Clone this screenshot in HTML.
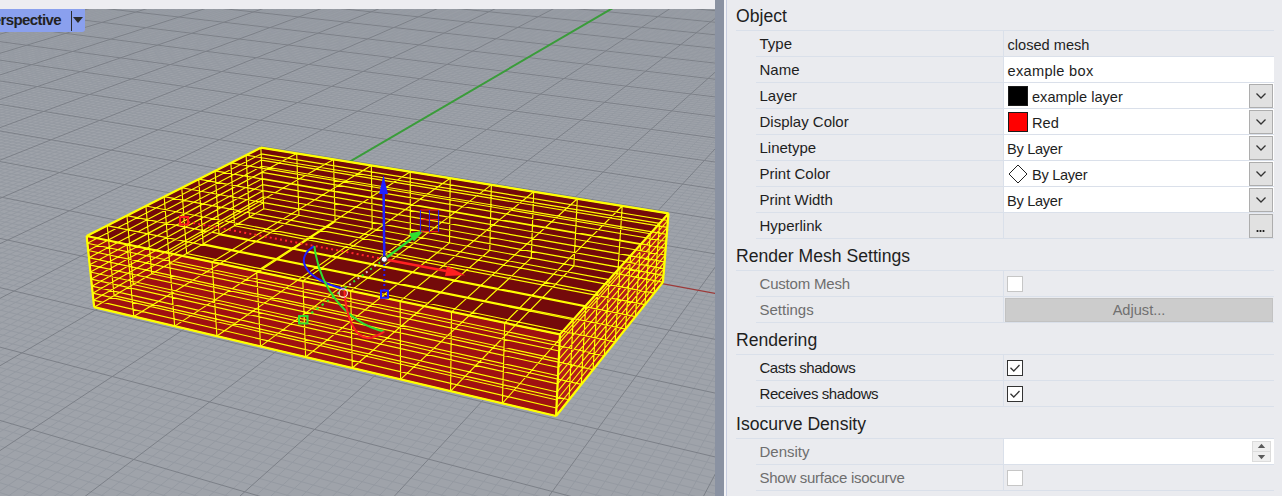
<!DOCTYPE html>
<html><head><meta charset="utf-8">
<style>
*{margin:0;padding:0;box-sizing:border-box}
html,body{width:1282px;height:496px;overflow:hidden;background:#eaebef;font-family:"Liberation Sans",sans-serif;color:#1e1e1e}
#topstrip{position:absolute;left:0;top:0;width:715px;height:9px;background:#ededf1}
#vsplit{position:absolute;left:715px;top:0;width:9px;height:496px;background:#8a92a2}
#vlight{position:absolute;left:724px;top:0;width:2px;height:496px;background:#f3f3f6}
#vline{position:absolute;left:726px;top:0;width:1px;height:496px;background:#c7cde0}
#panel{position:absolute;left:727px;top:0;width:555px;height:496px;background:#eaebef}
#tab{position:absolute;left:0;top:9px;width:85px;height:22.5px;background:#8aa0ee;border-bottom-right-radius:3px;overflow:hidden}
#tab .t{position:absolute;right:24px;top:1px;font-weight:bold;font-size:15px;letter-spacing:-0.6px;color:#222;white-space:nowrap;line-height:20px}
#tab .sep{position:absolute;left:71px;top:2px;width:1.2px;height:20px;background:#2a2a2a}
#tab .tri{position:absolute;left:72.8px;top:7.8px;width:0;height:0;border-left:5.2px solid transparent;border-right:5.2px solid transparent;border-top:6px solid #2a2a2a}
.hdr{position:absolute;left:736px;font-size:17.6px;color:#1e1e1e;white-space:nowrap;line-height:20px}
.hsep{position:absolute;left:736px;width:538px;height:1px;background:#dae0ea}
.rsep{position:absolute;left:756px;width:518px;height:1px;background:#dae0ea}
.cdiv{position:absolute;left:1003px;width:1px;background:#dae0ea}
.lbl{position:absolute;left:759.5px;font-size:15px;color:#1e1e1e;white-space:nowrap;line-height:18px}
.lbl.dis{color:#6e6e6e}
.val{position:absolute;font-size:14.6px;color:#1e1e1e;white-space:nowrap;line-height:18px;margin-top:1px}
.white{position:absolute;left:1004px;width:270px;background:#ffffff}
.dd{position:absolute;left:1249px;width:24px;height:24px;background:#e1e1e1;border:1px solid #adadad}
.dd svg{position:absolute;left:0;top:0}
.sw{position:absolute;left:1008px;width:20px;height:20px;border:1px solid #1a1a1a}
.cb{position:absolute;left:1007px;width:16px;height:16px;background:#fff}
.cb.off{border:1.5px solid #c6c6c6}
.cb.on{border:1.5px solid #333}
</style></head><body>
<div id="topstrip"></div>
<svg width="715" height="496" viewBox="0 0 715 496" style="position:absolute;left:0;top:0">
<defs><clipPath id="vp"><rect x="0" y="9" width="715" height="487"/></clipPath></defs>
<g clip-path="url(#vp)">
<rect x="0" y="9" width="715" height="487" fill="#9fa3aa"/>
<path d="M-1077.65 265.37L186.10 -52.21 M-1073.52 267.07L189.50 -51.91 M-1069.36 268.77L192.91 -51.61 M-1065.18 270.49L196.33 -51.30 M-1060.98 272.22L199.76 -51.00 M-1052.48 275.71L206.64 -50.38 M-1048.20 277.47L210.10 -50.08 M-1043.88 279.25L213.56 -49.77 M-1039.54 281.03L217.04 -49.46 M-1035.17 282.83L220.52 -49.15 M-1030.78 284.63L224.02 -48.84 M-1026.35 286.45L227.52 -48.53 M-1021.90 288.28L231.03 -48.21 M-1017.42 290.12L234.55 -47.90 M-1008.36 293.84L241.62 -47.27 M-1003.80 295.72L245.17 -46.95 M-999.20 297.61L248.72 -46.64 M-994.57 299.51L252.29 -46.32 M-989.91 301.43L255.87 -46.00 M-985.22 303.36L259.46 -45.68 M-980.49 305.30L263.05 -45.36 M-975.74 307.25L266.66 -45.04 M-970.96 309.22L270.28 -44.72 M-961.29 313.19L277.54 -44.07 M-956.41 315.19L281.18 -43.75 M-951.49 317.21L284.84 -43.42 M-946.55 319.25L288.50 -43.10 M-941.57 321.29L292.18 -42.77 M-936.55 323.36L295.86 -42.44 M-931.50 325.43L299.56 -42.11 M-926.42 327.52L303.27 -41.78 M-921.30 329.62L306.98 -41.45 M-910.95 333.87L314.44 -40.79 M-905.73 336.02L318.19 -40.45 M-900.46 338.19L321.95 -40.12 M-895.16 340.36L325.71 -39.78 M-889.83 342.56L329.49 -39.45 M-884.45 344.77L333.28 -39.11 M-879.04 346.99L337.08 -38.77 M-873.59 349.23L340.88 -38.43 M-868.10 351.49L344.70 -38.09 M-857.00 356.05L352.37 -37.41 M-851.39 358.35L356.23 -37.07 M-845.74 360.67L360.09 -36.72 M-840.05 363.01L363.96 -36.38 M-834.32 365.37L367.84 -36.03 M-828.55 367.74L371.74 -35.69 M-822.73 370.13L375.64 -35.34 M-816.87 372.54L379.56 -34.99 M-810.97 374.97L383.49 -34.64 M-799.03 379.87L391.38 -33.94 M-793.00 382.35L395.34 -33.59 M-786.91 384.85L399.31 -33.23 M-780.79 387.37L403.29 -32.88 M-774.62 389.90L407.29 -32.52 M-768.40 392.46L411.29 -32.17 M-762.13 395.04L415.31 -31.81 M-755.81 397.63L419.34 -31.45 M-749.45 400.25L423.38 -31.09 M-736.58 405.54L431.49 -30.37 M-730.06 408.21L435.57 -30.00 M-723.50 410.91L439.65 -29.64 M-716.89 413.63L443.75 -29.28 M-710.22 416.37L447.86 -28.91 M-703.50 419.13L451.98 -28.54 M-696.73 421.91L456.12 -28.17 M-689.90 424.72L460.26 -27.81 M-683.02 427.55L464.42 -27.44 M-669.09 433.27L472.77 -26.69 M-662.05 436.17L476.97 -26.32 M-654.94 439.09L481.17 -25.94 M-647.78 442.03L485.39 -25.57 M-640.56 445.00L489.62 -25.19 M-633.27 447.99L493.87 -24.81 M-625.93 451.01L498.12 -24.44 M-618.53 454.05L502.39 -24.06 M-611.07 457.12L506.67 -23.67 M-595.95 463.33L515.27 -22.91 M-588.30 466.47L519.59 -22.52 M-580.58 469.64L523.92 -22.14 M-572.80 472.84L528.26 -21.75 M-564.95 476.07L532.62 -21.36 M-557.03 479.32L536.99 -20.98 M-549.05 482.60L541.37 -20.58 M-541.00 485.91L545.77 -20.19 M-532.87 489.25L550.18 -19.80 M-516.41 496.02L559.04 -19.01 M-508.07 499.44L563.49 -18.62 M-499.66 502.90L567.95 -18.22 M-491.17 506.39L572.42 -17.82 M-482.61 509.91L576.91 -17.42 M-473.97 513.46L581.41 -17.02 M-465.26 517.04L585.93 -16.62 M-456.46 520.65L590.46 -16.22 M-447.58 524.30L595.00 -15.81 M-429.59 531.70L604.13 -15.00 M-420.47 535.44L608.72 -14.59 M-411.26 539.23L613.32 -14.18 M-401.97 543.05L617.93 -13.77 M-392.59 546.90L622.55 -13.36 M-383.13 550.79L627.20 -12.94 M-373.57 554.72L631.85 -12.53 M-363.93 558.68L636.52 -12.11 M-354.19 562.68L641.20 -11.70 M-334.44 570.80L650.62 -10.86 M-324.42 574.92L655.34 -10.44 M-314.30 579.07L660.08 -10.02 M-304.09 583.27L664.84 -9.59 M-293.78 587.51L669.61 -9.17 M-283.36 591.79L674.40 -8.74 M-272.84 596.11L679.20 -8.32 M-262.22 600.48L684.02 -7.89 M-251.49 604.89L688.85 -7.46 M-229.70 613.84L698.55 -6.59 M-218.65 618.38L703.43 -6.16 M-207.48 622.97L708.32 -5.72 M-196.19 627.61L713.23 -5.29 M-184.80 632.30L718.15 -4.85 M-173.28 637.03L723.09 -4.41 M-161.64 641.81L728.04 -3.97 M-149.88 646.64L733.01 -3.52 M-138.00 651.53L738.00 -3.08 M-113.86 661.45L748.02 -2.19 M-101.59 666.49L753.05 -1.74 M-89.20 671.58L758.10 -1.29 M-76.67 676.73L763.16 -0.84 M-64.00 681.94L768.24 -0.39 M-51.20 687.20L773.34 0.07 M-38.26 692.52L778.45 0.52 M-25.17 697.90L783.58 0.98 M-11.94 703.33L788.73 1.44 M14.97 714.39L799.07 2.36 M28.65 720.01L804.27 2.82 M42.49 725.70L809.49 3.28 M56.48 731.45L814.72 3.75 M70.63 737.27L819.96 4.22 M84.95 743.15L825.23 4.69 M99.43 749.10L830.51 5.16 M114.09 755.12L835.81 5.63 M128.91 761.22L841.13 6.10 M159.09 773.62L851.81 7.05 M174.44 779.93L857.18 7.53 M189.99 786.32L862.57 8.01 M205.72 792.78L867.97 8.49 M221.64 799.32L873.39 8.97 M237.75 805.95L878.83 9.46 M254.07 812.65L884.29 9.94 M270.58 819.44L889.77 10.43 M287.31 826.31L895.26 10.92 M321.38 840.32L906.31 11.90 M338.75 847.45L911.86 12.40 M356.33 854.68L917.43 12.89 M374.14 862.00L923.01 13.39 M392.19 869.41L928.62 13.89 M410.46 876.92L934.24 14.39 M428.98 884.53L939.89 14.89 M447.74 892.24L945.55 15.40 M466.75 900.06L951.23 15.90 M505.54 916.00L962.65 16.92 M525.33 924.13L968.39 17.43 M545.39 932.37L974.15 17.94 M565.72 940.73L979.93 18.46 M586.34 949.20L985.73 18.97 M607.24 957.79L991.55 19.49 M628.44 966.50L997.39 20.01 M649.94 975.34L1003.25 20.53 M671.74 984.30L1009.13 21.06 M716.29 1002.61L1020.94 22.11 M739.05 1011.96L1026.88 22.64 M762.14 1021.45L1032.85 23.17 M785.58 1031.08L1038.83 23.70 M809.36 1040.85L1044.83 24.23 M-1077.65 265.37L809.36 1040.85 M-1064.19 261.99L813.87 1021.38 M-1050.89 258.65L818.25 1002.48 M-1037.75 255.34L822.50 984.11 M-1024.77 252.08L826.64 966.26 M-999.28 245.68L834.57 932.02 M-986.76 242.53L838.37 915.59 M-974.39 239.42L842.08 899.60 M-962.16 236.35L845.68 884.03 M-950.07 233.31L849.19 868.87 M-938.13 230.31L852.62 854.09 M-926.32 227.34L855.95 839.68 M-914.64 224.41L859.21 825.64 M-903.10 221.51L862.38 811.94 M-880.41 215.80L868.50 785.53 M-869.25 213.00L871.45 772.80 M-858.22 210.23L874.33 760.36 M-847.31 207.48L877.14 748.21 M-836.52 204.77L879.89 736.35 M-825.84 202.09L882.58 724.75 M-815.29 199.44L885.20 713.41 M-804.84 196.81L887.77 702.32 M-794.51 194.22L890.28 691.48 M-774.18 189.11L895.14 670.49 M-764.18 186.59L897.50 660.33 M-754.28 184.11L899.80 650.39 M-744.48 181.64L902.06 640.65 M-734.79 179.21L904.26 631.11 M-725.20 176.80L906.43 621.76 M-715.70 174.41L908.55 612.61 M-706.31 172.05L910.63 603.63 M-697.01 169.71L912.67 594.84 M-678.69 165.11L916.62 577.76 M-669.66 162.84L918.54 569.46 M-660.73 160.60L920.43 561.33 M-651.89 158.38L922.28 553.35 M-643.13 156.18L924.09 545.51 M-634.46 154.00L925.87 537.82 M-625.88 151.84L927.62 530.27 M-617.38 149.70L929.34 522.86 M-608.96 147.59L931.02 515.59 M-592.37 143.42L934.30 501.42 M-584.19 141.36L935.90 494.52 M-576.09 139.33L937.47 487.74 M-568.07 137.31L939.01 481.08 M-560.12 135.31L940.53 474.53 M-552.25 133.34L942.02 468.09 M-544.45 131.38L943.49 461.76 M-536.73 129.43L944.93 455.54 M-529.07 127.51L946.35 449.42 M-513.97 123.72L949.11 437.47 M-506.53 121.85L950.46 431.64 M-499.15 119.99L951.79 425.91 M-491.84 118.15L953.10 420.26 M-484.59 116.33L954.39 414.71 M-477.41 114.53L955.65 409.24 M-470.30 112.74L956.90 403.86 M-463.24 110.97L958.13 398.56 M-456.25 109.21L959.34 393.34 M-442.45 105.74L961.70 383.13 M-435.65 104.03L962.86 378.14 M-428.90 102.34L963.99 373.23 M-422.21 100.66L965.12 368.39 M-415.57 98.99L966.22 363.61 M-409.00 97.34L967.31 358.91 M-402.48 95.70L968.38 354.28 M-396.01 94.07L969.44 349.71 M-389.60 92.46L970.49 345.20 M-376.95 89.28L972.53 336.38 M-370.70 87.71L973.53 332.07 M-364.50 86.15L974.52 327.81 M-358.35 84.61L975.49 323.61 M-352.26 83.08L976.45 319.46 M-346.21 81.56L977.39 315.38 M-340.22 80.05L978.33 311.34 M-334.27 78.56L979.25 307.36 M-328.37 77.07L980.16 303.44 M-316.72 74.15L981.94 295.74 M-310.96 72.70L982.82 291.97 M-305.25 71.26L983.68 288.24 M-299.59 69.84L984.53 284.56 M-293.97 68.43L985.37 280.93 M-288.39 67.03L986.20 277.35 M-282.86 65.64L987.02 273.81 M-277.37 64.26L987.83 270.31 M-271.92 62.89L988.63 266.86 M-261.16 60.18L990.20 260.08 M-255.84 58.85L990.97 256.75 M-250.56 57.52L991.73 253.47 M-245.32 56.20L992.49 250.22 M-240.12 54.90L993.23 247.01 M-234.97 53.60L993.96 243.84 M-229.85 52.31L994.69 240.71 M-224.76 51.04L995.41 237.61 M-219.72 49.77L996.12 234.55 M-209.75 47.26L997.51 228.54 M-204.82 46.03L998.19 225.58 M-199.92 44.80L998.87 222.66 M-195.06 43.57L999.54 219.77 M-190.24 42.36L1000.20 216.92 M-185.46 41.16L1000.85 214.09 M-180.70 39.97L1001.50 211.30 M-175.99 38.78L1002.14 208.54 M-171.30 37.60L1002.77 205.81 M-162.04 35.27L1004.02 200.44 M-157.45 34.12L1004.63 197.80 M-152.90 32.98L1005.23 195.18 M-148.38 31.84L1005.83 192.60 M-143.90 30.72L1006.42 190.04 M-139.44 29.60L1007.01 187.51 M-135.02 28.48L1007.59 185.01 M-130.63 27.38L1008.16 182.53 M-126.27 26.29L1008.73 180.08 M-117.64 24.12L1009.85 175.25 M-113.36 23.04L1010.40 172.88 M-109.12 21.98L1010.95 170.52 M-104.91 20.92L1011.48 168.20 M-100.73 19.87L1012.02 165.89 M-96.57 18.82L1012.55 163.61 M-92.45 17.79L1013.07 161.35 M-88.35 16.76L1013.59 159.12 M-84.28 15.73L1014.10 156.90 M-76.22 13.71L1015.11 152.54 M-72.23 12.70L1015.61 150.39 M-68.26 11.71L1016.10 148.27 M-64.33 10.72L1016.59 146.16 M-60.42 9.74L1017.07 144.07 M-56.53 8.76L1017.55 142.01 M-52.67 7.79L1018.02 139.96 M-48.84 6.83L1018.49 137.93 M-45.03 5.87L1018.96 135.93 M-37.48 3.97L1019.88 131.97 M-33.75 3.04L1020.33 130.01 M-30.04 2.10L1020.78 128.08 M-26.35 1.18L1021.22 126.16 M-22.69 0.26L1021.66 124.27 M-19.05 -0.66L1022.10 122.38 M-15.43 -1.57L1022.53 120.52 M-11.84 -2.47L1022.95 118.67 M-8.27 -3.37L1023.38 116.84 M-1.19 -5.15L1024.21 113.23 M2.31 -6.03L1024.63 111.45 M5.80 -6.90L1025.04 109.68 M9.26 -7.77L1025.44 107.94 M12.70 -8.64L1025.84 106.20 M16.11 -9.50L1026.24 104.48 M19.51 -10.35L1026.64 102.78 M22.89 -11.20L1027.03 101.09 M26.24 -12.04L1027.42 99.41 M32.89 -13.71L1028.18 96.11 M36.19 -14.54L1028.56 94.47 M39.46 -15.36L1028.93 92.85 M42.71 -16.18L1029.31 91.25 M45.95 -16.99L1029.67 89.66 M49.16 -17.80L1030.04 88.08 M52.36 -18.60L1030.40 86.52 M55.54 -19.40L1030.76 84.97 M58.70 -20.20L1031.12 83.43 M64.96 -21.77L1031.82 80.39 M68.06 -22.55L1032.17 78.89 M71.14 -23.32L1032.51 77.40 M74.21 -24.10L1032.86 75.92 M77.26 -24.86L1033.20 74.46 M80.29 -25.62L1033.53 73.00 M83.30 -26.38L1033.87 71.56 M86.30 -27.13L1034.20 70.13 M89.27 -27.88L1034.53 68.71 M95.18 -29.36L1035.18 65.91 M98.11 -30.10L1035.50 64.53 M101.02 -30.83L1035.81 63.15 M103.91 -31.56L1036.13 61.79 M106.79 -32.28L1036.44 60.44 M109.65 -33.00L1036.75 59.09 M112.49 -33.72L1037.06 57.76 M115.32 -34.43L1037.37 56.44 M118.13 -35.13L1037.67 55.13 M123.71 -36.54L1038.27 52.54 M126.48 -37.23L1038.57 51.25 M129.23 -37.92L1038.86 49.98 M131.96 -38.61L1039.16 48.72 M134.68 -39.29L1039.45 47.47 M137.39 -39.97L1039.74 46.22 M140.08 -40.65L1040.02 44.99 M142.76 -41.32L1040.31 43.76 M145.42 -41.99L1040.59 42.55 M150.70 -43.32L1041.14 40.14 M153.31 -43.97L1041.42 38.95 M155.92 -44.63L1041.69 37.77 M158.51 -45.28L1041.97 36.60 M161.08 -45.93L1042.24 35.43 M163.64 -46.57L1042.50 34.28 M166.19 -47.21L1042.77 33.13 M168.73 -47.85L1043.03 31.99 M171.25 -48.48L1043.29 30.86 M176.25 -49.74L1043.81 28.62 M178.73 -50.36L1044.07 27.51 M181.20 -50.98L1044.32 26.41 M183.66 -51.60L1044.58 25.32 M186.10 -52.21L1044.83 24.23" stroke="#959aa2" stroke-width="1" fill="none"/>
<path d="M-1056.74 273.96L203.20 -50.69 M-1012.90 291.98L238.08 -47.59 M-966.14 311.20L273.90 -44.40 M-916.14 331.74L310.71 -41.12 M-862.57 353.76L348.53 -37.75 M-805.02 377.41L387.43 -34.29 M-743.04 402.88L427.43 -30.73 M-676.09 430.40L468.59 -27.06 M-603.54 460.21L510.96 -23.29 M-524.68 492.62L554.60 -19.41 M-438.63 527.98L599.56 -15.40 M-240.65 609.34L693.69 -7.02 M-125.99 656.46L743.00 -2.64 M1.44 708.83L793.89 1.90 M143.91 767.38L846.46 6.58 M304.24 833.27L900.78 11.41 M486.02 907.97L956.93 16.41 M693.85 993.39L1015.02 21.58 M-1011.95 248.86L830.66 948.90 M-891.69 218.64L865.48 798.57 M-784.29 191.65L892.74 680.87 M-687.80 167.40L914.66 586.21 M-600.63 145.49L932.68 508.44 M-521.49 125.61L947.74 443.39 M-449.32 107.47L960.53 388.20 M-322.52 75.60L981.06 299.56 M-266.52 61.53L989.42 263.45 M-214.72 48.51L996.82 231.53 M-166.65 36.43L1003.40 203.11 M-121.94 25.20L1009.29 177.65 M-80.23 14.72L1014.61 154.71 M-41.24 4.92L1019.42 133.94 M-4.72 -4.26L1023.80 115.03 M29.58 -12.88L1027.80 97.75 M61.84 -20.99L1031.47 81.90 M92.23 -28.62L1034.85 67.31 M120.93 -35.84L1037.97 53.83 M148.06 -42.65L1040.87 41.34 M173.76 -49.11L1043.55 29.73 M-383.25 90.86L265.79 210.59 M-344.36 566.72L265.79 210.59" stroke="#7c8088" stroke-width="1" fill="none"/>
<path d="M265.79 210.59L971.51 340.76" stroke="#9c3a3a" stroke-width="1.3" fill="none"/>
<path d="M265.79 210.59L645.90 -11.28" stroke="#3a9c3a" stroke-width="2" fill="none"/>
<polygon points="86.64,235.99 559.99,334.37 556.08,415.96 94.15,307.14" fill="#a01111"/>
<polygon points="559.99,334.37 668.49,213.45 662.95,282.14 556.08,415.96" fill="#b31c1c"/>
<polygon points="86.64,235.99 260.84,147.70 668.49,213.45 559.99,334.37" fill="#740a0a"/>
<path d="M94.15 307.14L263.78 208.73 M94.15 307.14L556.08 415.96 M86.64 235.99L260.84 147.70 M86.64 235.99L559.99 334.37 M94.15 307.14L86.64 235.99 M94.15 307.14L556.08 415.96 M263.78 208.73L260.84 147.70 M263.78 208.73L662.95 282.14 M94.15 307.14L86.64 235.99 M94.15 307.14L263.78 208.73 M556.08 415.96L559.99 334.37 M556.08 415.96L662.95 282.14 M133.77 316.47L298.98 215.20 M114.09 295.57L568.98 399.81 M127.08 244.40L296.69 153.48 M107.18 225.58L573.15 319.71 M133.77 316.47L127.08 244.40 M93.41 300.17L556.46 408.00 M298.98 215.20L296.69 153.48 M263.49 202.73L663.49 275.40 M114.09 295.57L107.18 225.58 M93.41 300.17L263.49 202.73 M568.98 399.81L573.15 319.71 M556.46 408.00L663.49 275.40 M174.67 326.11L335.11 221.85 M133.27 284.45L581.30 384.38 M168.86 253.08L333.51 159.42 M126.93 215.57L585.70 305.72 M174.67 326.11L168.86 253.08 M92.67 293.17L556.85 400.00 M335.11 221.85L333.51 159.42 M263.20 196.71L664.04 268.64 M133.27 284.45L126.93 215.57 M92.67 293.17L263.20 196.71 M581.30 384.38L585.70 305.72 M556.85 400.00L664.04 268.64 M216.90 336.06L372.22 228.67 M151.73 273.74L593.08 369.63 M212.03 262.05L371.34 165.52 M145.91 205.95L597.69 292.36 M216.90 336.06L212.03 262.05 M91.93 286.14L557.23 391.95 M372.22 228.67L371.34 165.52 M262.91 190.67L664.59 261.85 M151.73 273.74L145.91 205.95 M91.93 286.14L262.91 190.67 M593.08 369.63L597.69 292.36 M557.23 391.95L664.59 261.85 M260.53 346.34L410.34 235.68 M169.50 263.42L604.35 355.52 M256.67 271.33L410.24 171.80 M164.19 196.69L609.14 279.60 M260.53 346.34L256.67 271.33 M91.19 279.07L557.62 383.86 M410.34 235.68L410.24 171.80 M262.62 184.60L665.14 255.03 M169.50 263.42L164.19 196.69 M91.19 279.07L262.62 184.60 M604.35 355.52L609.14 279.60 M557.62 383.86L665.14 255.03 M305.64 356.96L449.52 242.89 M186.64 253.48L615.15 342.00 M302.85 280.93L450.23 178.25 M181.78 187.77L620.10 267.38 M305.64 356.96L302.85 280.93 M90.44 271.98L558.01 375.73 M449.52 242.89L450.23 178.25 M262.32 178.51L665.69 248.17 M186.64 253.48L181.78 187.77 M90.44 271.98L262.32 178.51 M615.15 342.00L620.10 267.38 M558.01 375.73L665.69 248.17 M352.29 367.95L489.80 250.29 M203.16 243.90L625.50 329.04 M350.66 290.86L491.37 184.88 M198.74 179.17L630.60 255.68 M352.29 367.95L350.66 290.86 M89.68 264.84L558.40 367.55 M489.80 250.29L491.37 184.88 M262.03 172.39L666.25 241.29 M203.16 243.90L198.74 179.17 M89.68 264.84L262.03 172.39 M625.50 329.04L630.60 255.68 M558.40 367.55L666.25 241.29 M400.57 379.33L531.24 257.91 M219.11 234.64L635.43 316.60 M400.18 301.16L533.72 191.71 M215.09 170.88L640.66 244.47 M400.57 379.33L400.18 301.16 M88.93 257.68L558.80 359.32 M531.24 257.91L533.72 191.71 M261.73 166.26L666.80 234.38 M219.11 234.64L215.09 170.88 M88.93 257.68L261.73 166.26 M635.43 316.60L640.66 244.47 M558.80 359.32L666.80 234.38 M450.56 391.11L573.87 265.75 M234.51 225.71L644.97 304.66 M451.51 311.82L577.31 198.74 M230.88 162.89L650.31 233.71 M450.56 391.11L451.51 311.82 M88.17 250.48L559.19 351.05 M573.87 265.75L577.31 198.74 M261.44 160.09L667.36 227.43 M234.51 225.71L230.88 162.89 M88.17 250.48L261.44 160.09 M644.97 304.66L650.31 233.71 M559.19 351.05L667.36 227.43 M502.37 403.31L617.76 273.83 M249.40 217.08L654.13 293.18 M504.74 322.89L622.22 205.99 M246.11 155.16L659.58 223.38 M502.37 403.31L504.74 322.89 M87.40 243.25L559.59 342.73 M617.76 273.83L622.22 205.99 M261.14 153.91L667.93 220.46 M249.40 217.08L246.11 155.16 M87.40 243.25L261.14 153.91 M654.13 293.18L659.58 223.38 M559.59 342.73L667.93 220.46 M556.08 415.96L662.95 282.14 M263.78 208.73L662.95 282.14 M559.99 334.37L668.49 213.45 M260.84 147.70L668.49 213.45 M556.08 415.96L559.99 334.37 M86.64 235.99L559.99 334.37 M662.95 282.14L668.49 213.45 M260.84 147.70L668.49 213.45 M263.78 208.73L260.84 147.70 M86.64 235.99L260.84 147.70 M662.95 282.14L668.49 213.45 M559.99 334.37L668.49 213.45" stroke="#ffff00" stroke-width="1.15" fill="none"/>
<path d="M86.64 235.99L260.84 147.70 M260.84 147.70L668.49 213.45 M668.49 213.45L559.99 334.37 M559.99 334.37L86.64 235.99 M86.64 235.99L94.15 307.14 M559.99 334.37L556.08 415.96 M668.49 213.45L662.95 282.14 M94.15 307.14L556.08 415.96 M556.08 415.96L662.95 282.14" stroke="#ffff00" stroke-width="2.2" fill="none" stroke-linejoin="round"/>
<g>
<path d="M188 222 L384.3 259.2" stroke="#ff2a2a" stroke-width="2" stroke-dasharray="2 3.2" fill="none"/>
<path d="M345 288 L384.3 259.2" stroke="#ffffff" stroke-width="2" stroke-dasharray="2 8.4" stroke-dashoffset="-5.2" fill="none" opacity="0.75"/>
<path d="M306 317 L345 288" stroke="#30e030" stroke-width="2" stroke-dasharray="2.5 4" fill="none"/>
<path d="M345 288 L384.3 259.2" stroke="#30e030" stroke-width="2" stroke-dasharray="2 8.4" fill="none"/>
<path d="M384.3 291 L384.3 259.2" stroke="#2020ff" stroke-width="2" stroke-dasharray="2 3" fill="none"/>
<rect x="180" y="217" width="8" height="7.5" fill="none" stroke="#ff2020" stroke-width="2"/>
<rect x="299" y="316" width="8.5" height="7.5" fill="none" stroke="#30e030" stroke-width="2"/>
<rect x="381" y="290.6" width="7" height="7.2" fill="none" stroke="#2020ff" stroke-width="2"/>
<path d="M314.4 246.1 C296 256 299 277 344.3 289.3" stroke="#2020ff" stroke-width="2" fill="none"/>
<path d="M314.4 246.1 C319 285 344 322 384.3 331.5" stroke="#30e030" stroke-width="2" fill="none"/>
<path d="M344.3 290.4 C346 318 356 342 372 337.5 C378 335.5 381 333.5 384.3 331.5" stroke="#ff2020" stroke-width="2" fill="none"/>
<circle cx="343.2" cy="293.1" r="4.2" fill="none" stroke="#ffd8d8" stroke-width="1.2"/>
<path d="M384.3 259.2 L383.6 192" stroke="#2020ff" stroke-width="2.5" fill="none"/>
<polygon points="383.5,175.3 379,194 388,194" fill="#2020ff"/>
<path d="M384.3 259.2 L414 237" stroke="#30e030" stroke-width="2.5" fill="none"/>
<polygon points="424,230.5 409,233.5 414,241.5" fill="#30e030"/>
<path d="M384.3 259.2 L446 271" stroke="#ff2020" stroke-width="2.5" fill="none"/>
<polygon points="465.2,275.2 447,266 445,276" fill="#ff2020"/>
<circle cx="384.3" cy="259.2" r="3" fill="#ffffff" stroke="#333" stroke-width="1"/>
<path d="M420.4 210 H438.6 M420.4 219.6 H438.6 M420.4 231.7 H438.6" stroke="#ff2020" stroke-width="1" fill="none"/>
<path d="M420.4 210 V231.7 M429.4 210 V231.7 M438.6 210 V231.7" stroke="#2020ff" stroke-width="1" fill="none"/>
</g>
</g></svg>
<div id="tab"><span class="t">Perspective</span><div class="sep"></div><div class="tri"></div></div>
<div id="vsplit"></div><div id="vlight"></div><div id="vline"></div>
<div id="panel"></div>

<!-- separators -->
<div class="hsep" style="top:30px"></div>
<div class="rsep" style="top:56px"></div>
<div class="rsep" style="top:82px"></div>
<div class="rsep" style="top:108px"></div>
<div class="rsep" style="top:134px"></div>
<div class="rsep" style="top:160px"></div>
<div class="rsep" style="top:186px"></div>
<div class="rsep" style="top:212px"></div>
<div class="rsep" style="top:238px"></div>
<div class="hsep" style="top:270px"></div>
<div class="rsep" style="top:296px"></div>
<div class="rsep" style="top:322px"></div>
<div class="hsep" style="top:354px"></div>
<div class="rsep" style="top:380px"></div>
<div class="rsep" style="top:406px"></div>
<div class="hsep" style="top:438px"></div>
<div class="rsep" style="top:464px"></div>
<div class="rsep" style="top:490px"></div>

<div class="cdiv" style="top:31px;height:207px"></div>
<div class="cdiv" style="top:271px;height:51px"></div>
<div class="cdiv" style="top:355px;height:51px"></div>
<div class="cdiv" style="top:439px;height:51px"></div>

<!-- white fields -->
<div class="white" style="top:57px;height:25px"></div>
<div class="white" style="top:83px;height:25px"></div>
<div class="white" style="top:109px;height:25px"></div>
<div class="white" style="top:135px;height:25px"></div>
<div class="white" style="top:161px;height:25px"></div>
<div class="white" style="top:187px;height:25px"></div>
<div class="white" style="top:439px;height:25px"></div>

<!-- headers -->
<div class="hdr" style="top:6px">Object</div>
<div class="hdr" style="top:245.5px">Render Mesh Settings</div>
<div class="hdr" style="top:329.5px">Rendering</div>
<div class="hdr" style="top:413.5px">Isocurve Density</div>

<!-- labels -->
<div class="lbl" style="top:35px">Type</div>
<div class="lbl" style="top:61px">Name</div>
<div class="lbl" style="top:87px">Layer</div>
<div class="lbl" style="top:113px">Display Color</div>
<div class="lbl" style="top:139px">Linetype</div>
<div class="lbl" style="top:165px">Print Color</div>
<div class="lbl" style="top:191px">Print Width</div>
<div class="lbl" style="top:217px">Hyperlink</div>
<div class="lbl dis" style="top:275px;letter-spacing:-0.2px">Custom Mesh</div>
<div class="lbl dis" style="top:301px">Settings</div>
<div class="lbl" style="top:359px;letter-spacing:-0.46px">Casts shadows</div>
<div class="lbl" style="top:385px;letter-spacing:-0.4px">Receives shadows</div>
<div class="lbl dis" style="top:443px">Density</div>
<div class="lbl dis" style="top:469px;letter-spacing:-0.28px">Show surface isocurve</div>

<!-- values -->
<div class="val" style="left:1007.5px;top:35px">closed mesh</div>
<div class="val" style="left:1007.5px;top:61px;letter-spacing:0.3px">example box</div>
<div class="sw" style="top:86px;background:#000"></div>
<div class="val" style="left:1032px;top:87px">example layer</div>
<div class="sw" style="top:112px;background:#ff0000"></div>
<div class="val" style="left:1032px;top:113px">Red</div>
<div class="val" style="left:1007px;top:139px;letter-spacing:-0.3px">By Layer</div>
<svg style="position:absolute;left:1008px;top:164px" width="20" height="20"><polygon points="10,1 19,10 10,19 1,10" fill="#fff" stroke="#222" stroke-width="1"/></svg>
<div class="val" style="left:1032px;top:165px;letter-spacing:-0.3px">By Layer</div>
<div class="val" style="left:1007px;top:191px;letter-spacing:-0.3px">By Layer</div>

<!-- dropdown buttons -->
<div class="dd" style="top:84px"><svg width="22" height="22"><path d="M6.5 8.5 L11 13 L15.5 8.5" fill="none" stroke="#333" stroke-width="1.3"/></svg></div>
<div class="dd" style="top:110px"><svg width="22" height="22"><path d="M6.5 8.5 L11 13 L15.5 8.5" fill="none" stroke="#333" stroke-width="1.3"/></svg></div>
<div class="dd" style="top:136px"><svg width="22" height="22"><path d="M6.5 8.5 L11 13 L15.5 8.5" fill="none" stroke="#333" stroke-width="1.3"/></svg></div>
<div class="dd" style="top:162px"><svg width="22" height="22"><path d="M6.5 8.5 L11 13 L15.5 8.5" fill="none" stroke="#333" stroke-width="1.3"/></svg></div>
<div class="dd" style="top:188px"><svg width="22" height="22"><path d="M6.5 8.5 L11 13 L15.5 8.5" fill="none" stroke="#333" stroke-width="1.3"/></svg></div>
<div class="dd" style="top:214px"><svg width="22" height="22"><circle cx="7.5" cy="16" r="1.1" fill="#111"/><circle cx="10.5" cy="16" r="1.1" fill="#111"/><circle cx="13.5" cy="16" r="1.1" fill="#111"/></svg></div>

<!-- checkboxes -->
<div class="cb off" style="top:276px"></div>
<div style="position:absolute;left:1005px;top:298px;width:268px;height:24px;background:#cccccc;border:1px solid #c2c2c2"></div>
<div style="position:absolute;left:1005px;top:300px;width:268px;text-align:center;font-size:14.6px;color:#707070;line-height:20px">Adjust...</div>
<div class="cb on" style="top:360px"><svg width="14" height="14" style="position:absolute;left:0;top:0"><path d="M2.5 6.8 L5.8 10 L11.5 4" fill="none" stroke="#333" stroke-width="1.3"/></svg></div>
<div class="cb on" style="top:386px"><svg width="14" height="14" style="position:absolute;left:0;top:0"><path d="M2.5 6.8 L5.8 10 L11.5 4" fill="none" stroke="#333" stroke-width="1.3"/></svg></div>
<div class="cb off" style="top:470px"></div>

<!-- spinner -->
<div style="position:absolute;left:1252px;top:441px;width:19px;height:21px;background:#dcdcdc"></div>
<div style="position:absolute;left:1253px;top:442px;width:17px;height:9px;background:#efefef"></div>
<div style="position:absolute;left:1253px;top:452px;width:17px;height:9px;background:#efefef"></div>
<svg style="position:absolute;left:1252px;top:441px" width="19" height="21"><polygon points="5.8,7 13.2,7 9.5,2.8" fill="#5a5a5a"/><polygon points="5.8,14 13.2,14 9.5,18.2" fill="#5a5a5a"/></svg>
</body></html>
